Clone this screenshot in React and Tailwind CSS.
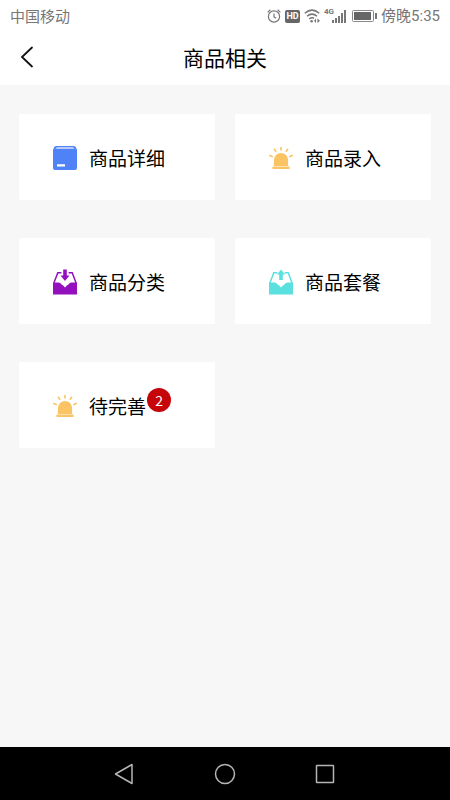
import React from "react";

/**
 * Goods menu screen
 * - Status bar, title header, grid of entries, system navigation
 */

const entries = [
  { label: "商品详细", icon: <BoxIcon /> },
  { label: "商品录入", icon: <AlarmLightIcon /> },
  { label: "商品分类", icon: <InboxIcon className="text-[#9410bd]" /> },
  { label: "商品套餐", icon: <InboxIcon className="text-[#5be0e0]" up /> },
  { label: "待完善", icon: <AlarmLightIcon />, count: 2 },
];

export default function App() {
  return (
    <div className="flex min-h-screen flex-col bg-[#f7f7f7] font-['Noto_Sans_CJK_SC',sans-serif] text-black">
      <StatusBar />
      <Header title="商品相关" />
      <main className="grid flex-1 grid-cols-2 content-start gap-x-5 gap-y-[38px] px-[19px] pt-[29px] pb-8">
        {entries.map((entry) => (
          <Entry key={entry.label} {...entry} />
        ))}
      </main>
      <SystemNav />
    </div>
  );
}

function StatusBar() {
  return (
    <div className="flex h-8 items-center justify-between bg-white px-[10px] text-[15px] leading-5 text-[#777]">
      <span>中国移动</span>
      <div className="flex items-center">
        <ClockIcon />
        <span className="ml-1 flex h-[13px] w-[15px] items-center justify-center rounded-xs bg-[#666] font-['Roboto',sans-serif] text-[9px] leading-none font-bold text-white">
          HD
        </span>
        <WifiIcon />
        <SignalIcon />
        <BatteryIcon />
        <span className="ml-1 font-['Roboto','Noto_Sans_CJK_SC',sans-serif]">傍晚5:35</span>
      </div>
    </div>
  );
}

function Header({ title }) {
  return (
    <header className="relative flex h-[53px] items-center justify-center bg-white pb-1">
      <button type="button" aria-label="返回" className="absolute left-4 p-1">
        <svg className="h-[22px] w-[14px]" viewBox="0 0 14 22" fill="none" stroke="#111" strokeWidth="1.8">
          <path d="M12 1.5 L2 11 L12 20.5" strokeLinecap="round" />
        </svg>
      </button>
      <h1 className="text-[21px] leading-7">{title}</h1>
    </header>
  );
}

function Entry({ label, icon, count }) {
  return (
    <button type="button" className="flex h-[86px] items-center gap-3 rounded-xs bg-white pt-px pl-[34px]">
      {icon}
      <span className="relative text-[19px] leading-7 whitespace-nowrap">
        {label}
        {count && (
          <span className="absolute -top-1 left-full ml-px flex size-6 items-center justify-center rounded-full bg-[#c50509] text-sm leading-none text-white">
            {count}
          </span>
        )}
      </span>
    </button>
  );
}

function SystemNav() {
  return (
    <nav className="flex h-[53px] items-center justify-center gap-[76px] bg-black text-[#b5b5b5]">
      <button type="button" aria-label="后退">
        <svg className="size-6" viewBox="0 0 24 24" fill="none" stroke="currentColor" strokeWidth="1.5">
          <path d="M19 2.5 V21.5 L2.5 12 Z" strokeLinejoin="round" />
        </svg>
      </button>
      <button type="button" aria-label="主页">
        <svg className="size-6" viewBox="0 0 24 24" fill="none" stroke="currentColor" strokeWidth="1.5">
          <circle cx="12" cy="12" r="9.5" />
        </svg>
      </button>
      <button type="button" aria-label="最近任务">
        <svg className="size-6" viewBox="0 0 24 24" fill="none" stroke="currentColor" strokeWidth="1.5">
          <rect x="3.5" y="3.5" width="17" height="17" rx="0.5" />
        </svg>
      </button>
    </nav>
  );
}

function BoxIcon() {
  return (
    <svg aria-hidden className="size-6 shrink-0" viewBox="0 0 24 24">
      <path d="M3 0 H21 Q22.4 0 23 1.6 L24 4 V22 Q24 24 22 24 H2 Q0 24 0 22 V4 L1 1.6 Q1.6 0 3 0 Z" fill="#4f82f7" />
      <path d="M4 1 H20 L21.6 3 H2.4 Z" fill="#b5cafb" />
      <rect x="4" y="18.2" width="8" height="2.4" rx="0.4" fill="#fff" />
    </svg>
  );
}

function AlarmLightIcon() {
  return (
    <svg aria-hidden className="size-6 shrink-0" viewBox="0 0 24 24" fill="#fac364">
      <path d="M4.9 20 V14 A7.1 7.1 0 0 1 19.1 14 V20 Z" />
      <rect x="3.4" y="20.6" width="17.2" height="2.4" rx="0.4" />
      <path
        d="M12 1 V4.6 M5 2.8 L7.2 5.8 M19 2.8 L16.8 5.8 M0.3 9.2 L3.8 10.8 M23.7 9.2 L20.2 10.8"
        stroke="#fac364"
        strokeWidth="1.6"
      />
    </svg>
  );
}

function InboxIcon({ className, up }) {
  return (
    <svg aria-hidden className={`h-[26px] w-6 shrink-0 ${className}`} viewBox="0 0 24 26" fill="currentColor">
      <path d="M0 13.5 H5.5 Q7.5 13.5 8.6 15.6 Q9.2 16.4 10.2 16.4 L12 18.4 L13.8 16.4 Q14.8 16.4 15.4 15.6 Q16.5 13.5 18.5 13.5 H24 V25.5 H0 Z" />
      <path
        d="M8.4 3.7 H4.8 L0.9 14 M15.6 3.7 H19.2 L23.1 14"
        fill="none"
        stroke="currentColor"
        strokeWidth="1.5"
      />
      {up ? (
        <path d="M12 0.5 L16 5.5 H13.8 V11 H10.2 V5.5 H8 Z" />
      ) : (
        <path d="M10.2 0.5 H13.8 V6.5 H16.5 L12 12 L7.5 6.5 H10.2 Z" />
      )}
    </svg>
  );
}

function ClockIcon() {
  return (
    <svg aria-hidden className="size-[14px]" viewBox="0 0 14 14" fill="none" stroke="#777" strokeWidth="1.2">
      <circle cx="7" cy="7.5" r="5.6" />
      <path d="M7 4.5 V7.8 L9.2 9.2 M0.6 3.4 L3.4 0.8 M13.4 3.4 L10.6 0.8" />
    </svg>
  );
}

function WifiIcon() {
  return (
    <svg aria-hidden className="ml-1 h-[14px] w-4" viewBox="0 0 16 14" fill="none" stroke="#777" strokeWidth="1.5">
      <path d="M0.8 4.2 Q8 -2 15.2 4.2 M3 7.2 Q8 3 13 7.2 M5.2 10 Q8 7.8 10 9.3" />
      <circle cx="7.6" cy="12.2" r="1.3" fill="#777" stroke="none" />
      <path d="M10 11.8 L12 9.6 V14 Z M16 11.8 L13.4 9.6 V14 Z" fill="#777" stroke="none" />
    </svg>
  );
}

function SignalIcon() {
  return (
    <div className="ml-1 flex h-4 items-start">
      <span className="-mr-[2px] font-['Roboto',sans-serif] text-[8px] leading-[8px] font-bold">4G</span>
      <svg aria-hidden className="h-4 w-[14px]" viewBox="0 0 14 16" fill="#777">
        <rect x="0" y="12" width="2" height="3" />
        <rect x="3" y="10" width="2" height="5" />
        <rect x="6" y="8" width="2" height="7" />
        <rect x="9" y="5" width="2" height="10" />
        <rect x="12" y="2" width="2" height="13" />
      </svg>
    </div>
  );
}

function BatteryIcon() {
  return (
    <svg aria-hidden className="ml-[6px] h-3 w-[25px]" viewBox="0 0 25 12">
      <rect x="0.5" y="0.5" width="21" height="11" rx="1" fill="none" stroke="#888" />
      <rect x="2" y="2" width="17" height="8" fill="#666" />
      <rect x="23" y="3" width="2" height="6" fill="#777" />
    </svg>
  );
}
